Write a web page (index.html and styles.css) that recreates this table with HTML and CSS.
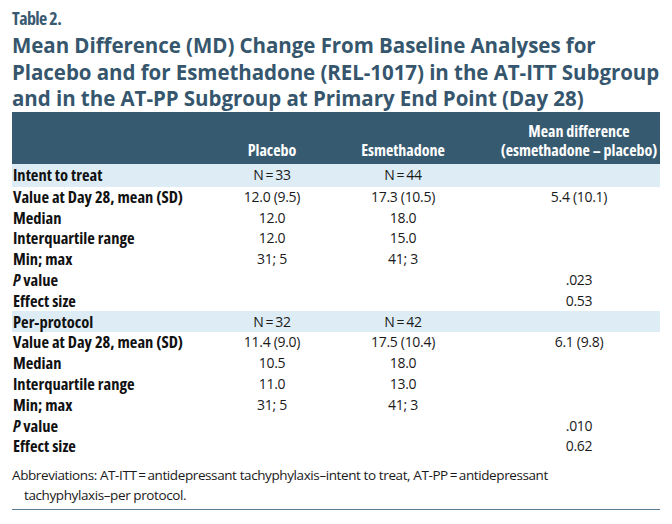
FILE: index.html
```html
<!DOCTYPE html>
<html>
<head>
<meta charset="utf-8">
<link rel="stylesheet" href="styles.css">
</head>
<body>
<div class="page">
  <div class="label">Table 2.</div>
  <h1 class="title">Mean Difference (MD) Change From Baseline Analyses for<br>Placebo and for Esmethadone (REL-1017) in the AT-ITT Subgroup<br>and in the AT-PP Subgroup at Primary End Point (Day 28)</h1>
  <table class="data">
    <thead>
      <tr>
        <th class="c1"></th>
        <th class="c2">Placebo</th>
        <th class="c3">Esmethadone</th>
        <th class="c4">Mean difference<br>(esmethadone – placebo)</th>
      </tr>
    </thead>
    <tbody>
      <tr class="group first"><td class="c1">Intent to treat</td><td class="c2">N&#8201;=&#8201;33</td><td class="c3">N&#8201;=&#8201;44</td><td class="c4"></td></tr>
      <tr><td class="c1">Value at Day 28, mean (SD)</td><td class="c2">12.0 (9.5)</td><td class="c3">17.3 (10.5)</td><td class="c4">5.4 (10.1)</td></tr>
      <tr><td class="c1">Median</td><td class="c2">12.0</td><td class="c3">18.0</td><td class="c4"></td></tr>
      <tr><td class="c1">Interquartile range</td><td class="c2">12.0</td><td class="c3">15.0</td><td class="c4"></td></tr>
      <tr><td class="c1">Min; max</td><td class="c2">31; 5</td><td class="c3">41; 3</td><td class="c4"></td></tr>
      <tr><td class="c1"><i>P</i> value</td><td class="c2"></td><td class="c3"></td><td class="c4">.023</td></tr>
      <tr><td class="c1">Effect size</td><td class="c2"></td><td class="c3"></td><td class="c4">0.53</td></tr>
      <tr class="group"><td class="c1">Per-protocol</td><td class="c2">N&#8201;=&#8201;32</td><td class="c3">N&#8201;=&#8201;42</td><td class="c4"></td></tr>
      <tr><td class="c1">Value at Day 28, mean (SD)</td><td class="c2">11.4 (9.0)</td><td class="c3">17.5 (10.4)</td><td class="c4">6.1 (9.8)</td></tr>
      <tr><td class="c1">Median</td><td class="c2">10.5</td><td class="c3">18.0</td><td class="c4"></td></tr>
      <tr><td class="c1">Interquartile range</td><td class="c2">11.0</td><td class="c3">13.0</td><td class="c4"></td></tr>
      <tr><td class="c1">Min; max</td><td class="c2">31; 5</td><td class="c3">41; 3</td><td class="c4"></td></tr>
      <tr><td class="c1"><i>P</i> value</td><td class="c2"></td><td class="c3"></td><td class="c4">.010</td></tr>
      <tr><td class="c1">Effect size</td><td class="c2"></td><td class="c3"></td><td class="c4">0.62</td></tr>
    </tbody>
  </table>
  <p class="note">Abbreviations: AT-ITT&#8201;=&#8201;antidepressant tachyphylaxis–intent to treat, AT-PP&#8201;=&#8201;antidepressant tachyphylaxis–per protocol.</p>
</div>
</body>
</html>
```

FILE: styles.css
```css
html, body {
  margin: 0;
  padding: 0;
  background: #ffffff;
}
.page {
  width: 648px;
  padding: 6px 12px 0 12px;
  color: #1a1a1a;
}
.label {
  font-family: "Open Sans", sans-serif;
  font-stretch: 75%;
  font-weight: 700;
  font-size: 18px;
  line-height: 24px;
  letter-spacing: -0.6px;
  color: #3a5a72;
}
.title {
  margin: 2px 0 0 0;
  font-family: "Open Sans", sans-serif;
  font-weight: 700;
  font-size: 20.5px;
  line-height: 26.5px;
  letter-spacing: -0.05px;
  white-space: nowrap;
  color: #35566d;
}
.data {
  width: 648px;
  margin-top: 0;
  border-collapse: collapse;
  table-layout: fixed;
}
.data th {
  background: #365a70;
  color: #ffffff;
  height: 48px;
  vertical-align: bottom;
  padding: 0 0 4px 0;
  font-family: "Open Sans", sans-serif;
  font-stretch: 75%;
  font-weight: 700;
  font-size: 16px;
  line-height: 19px;
  text-align: center;
  white-space: nowrap;
}
.data td {
  height: 20.8px;
  padding: 0;
  line-height: 18px;
  font-family: "Open Sans", sans-serif;
  font-size: 14px;
  letter-spacing: -0.3px;
  text-align: center;
  color: #1a1a1a;
  white-space: nowrap;
}
.data td.c1 {
  text-align: left;
  padding-left: 1px;
  font-family: "Open Sans", sans-serif;
  font-stretch: 75%;
  font-weight: 700;
  font-size: 16.5px;
  letter-spacing: 0;
  color: #111111;
}
.data .group td {
  background: #deedf5;
}
.data tr.first td {
  height: 23px;
}
.c1 { width: 210px; }
.c2 { width: 100px; }
.c3 { width: 162px; }
.data .c4 {
  padding-left: 14px;
}
.note {
  margin: 8px 0 0 0;
  padding: 0 60px 4px 12px;
  text-indent: -12px;
  font-family: "Open Sans", sans-serif;
  font-size: 13.5px;
  line-height: 20px;
  letter-spacing: -0.4px;
  color: #1a1a1a;
  border-bottom: 1.5px solid #5b7b90;
}
```
